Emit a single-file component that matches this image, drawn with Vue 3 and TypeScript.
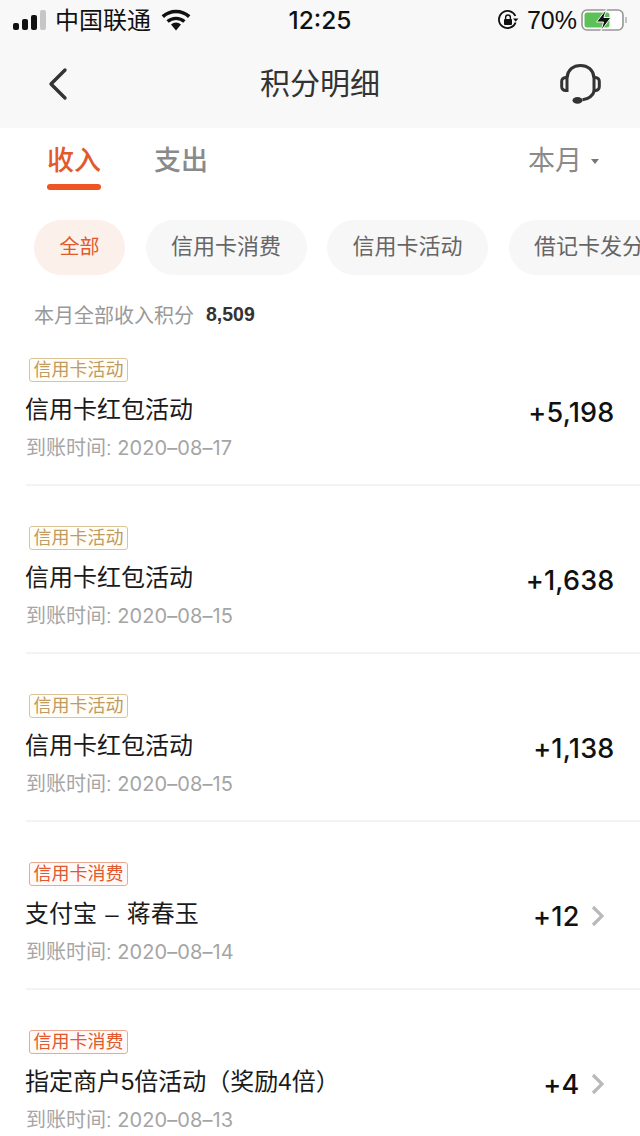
<script setup lang="ts">
interface PointRow {
  tag: string
  title: string
  date: string
  amount: string
  more?: boolean
}

const chips = ["全部", "信用卡消费", "信用卡活动", "借记卡发分"]

const rows: PointRow[] = [
  { tag: "信用卡活动", title: "信用卡红包活动", date: "2020–08–17", amount: "+5,198" },
  { tag: "信用卡活动", title: "信用卡红包活动", date: "2020–08–15", amount: "+1,638" },
  { tag: "信用卡活动", title: "信用卡红包活动", date: "2020–08–15", amount: "+1,138" },
  { tag: "信用卡消费", title: "支付宝 – 蒋春玉", date: "2020–08–14", amount: "+12", more: true },
  { tag: "信用卡消费", title: "指定商户5倍活动（奖励4倍）", date: "2020–08–13", amount: "+4", more: true },
]
</script>

<template>
  <div class="page">
    <div class="top">
      <div class="status">
        <div class="status-side">
          <svg class="signal" width="34" height="22" viewBox="0 0 34 22">
            <rect x="0" y="14" width="6" height="7" rx="2" fill="#111" />
            <rect x="9" y="10" width="6" height="11" rx="2" fill="#111" />
            <rect x="18" y="6" width="6" height="15" rx="2" fill="#111" />
            <rect x="27" y="1" width="6" height="20" rx="2" fill="#c6c6c6" />
          </svg>
          <span class="carrier">中国联通</span>
          <svg class="wifi" width="30" height="22" viewBox="0 0 30 22">
            <path d="M15 21.5 10 15.4a7.6 7.6 0 0 1 10 0Z" fill="#111" />
            <path d="M1.8 7.6a19.6 19.6 0 0 1 26.4 0" fill="none" stroke="#111" stroke-width="3.6" />
            <path d="M6.6 12.6a12.6 12.6 0 0 1 16.8 0" fill="none" stroke="#111" stroke-width="3.4" />
          </svg>
        </div>
        <span class="clock">12:25</span>
        <div class="status-side status-right">
          <svg width="22" height="22" viewBox="0 0 22 22">
            <path d="M18.6 13.5A8.6 8.6 0 1 1 18.4 7" fill="none" stroke="#111" stroke-width="1.8" />
            <path d="M16 9.6h5.4l-2.7 3.2Z" fill="#111" />
            <rect x="7" y="10" width="8" height="6" rx="1" fill="#111" />
            <path d="M8.6 10V8.4a2.4 2.4 0 0 1 4.8 0V10" fill="none" stroke="#111" stroke-width="1.4" />
          </svg>
          <span class="battery-text">70%</span>
          <svg class="battery" width="46" height="24" viewBox="0 0 46 24">
            <rect x="1" y="2" width="41" height="20" rx="5" fill="#fff" stroke="#969696" stroke-width="1.6" />
            <rect x="3.5" y="4.5" width="25" height="15" rx="2.5" fill="#5cc159" />
            <path d="M45 9v6" stroke="#b5b5b5" stroke-width="1.6" />
            <path d="M25.5 1 15.5 14h7l-2.6 9 10-13.5h-7Z" fill="#111" stroke="#f8f8f8" stroke-width="1" />
          </svg>
        </div>
      </div>
      <div class="nav">
        <svg class="nav-back" width="22" height="36" viewBox="0 0 22 36">
          <path d="M18 4 4 18l14 14" fill="none" stroke="#333" stroke-width="3.4" stroke-linecap="round" stroke-linejoin="round" />
        </svg>
        <span class="nav-title">积分明细</span>
        <svg class="nav-service" width="44" height="42" viewBox="0 0 44 42">
          <path d="M8 14.5C9 6.5 14.5 2.5 21.5 2.5S34 6.5 35 14.5" fill="none" stroke="#333" stroke-width="3.2" />
          <path d="M8 14.5H6.5a3.8 3.8 0 0 0-3.8 3.8v5.4a3.8 3.8 0 0 0 3.8 3.8H8Z" fill="none" stroke="#333" stroke-width="3" />
          <path d="M35 14.5h1.5a3.8 3.8 0 0 1 3.8 3.8v5.4a3.8 3.8 0 0 1-3.8 3.8H35Z" fill="none" stroke="#333" stroke-width="3" />
          <path d="M35.5 27.5c-1.5 5-6 8.4-12 9.2" fill="none" stroke="#333" stroke-width="3" />
          <ellipse cx="18.5" cy="37.4" rx="5" ry="3.4" fill="#333" />
        </svg>
      </div>
    </div>

    <div class="tabs">
      <div class="tab tab-active">收入</div>
      <div class="tab">支出</div>
      <div class="month">
        <span>本月</span>
        <i class="month-caret"></i>
      </div>
    </div>

    <div class="chips">
      <span
        v-for="(chip, index) in chips"
        :key="chip"
        class="chip"
        :class="{ 'chip-active': index === 0 }"
      >{{ chip }}</span>
    </div>

    <div class="summary">
      <span>本月全部收入积分</span>
      <b>8,509</b>
    </div>

    <div class="list">
      <div v-for="row in rows" :key="row.date + row.amount" class="row">
        <div class="row-main">
          <span class="tag" :class="{ 'tag-spend': row.tag === '信用卡消费' }">{{ row.tag }}</span>
          <div class="row-title">{{ row.title }}</div>
          <div class="row-date">到账时间: <span class="row-day">{{ row.date }}</span></div>
        </div>
        <div class="row-amount" :class="{ 'row-amount-more': row.more }">
          <span>{{ row.amount }}</span>
          <svg v-if="row.more" width="14" height="22" viewBox="0 0 14 22">
            <path d="M2 2 11 11l-9 9" fill="none" stroke="#b9b9b9" stroke-width="3.2" />
          </svg>
        </div>
      </div>
    </div>
  </div>
</template>

<style scoped>
.page {
  width: 640px;
  height: 1136px;
  overflow: hidden;
  background: #fff;
  font-family: "Liberation Sans", "Noto Sans CJK SC", sans-serif;
}

.top {
  height: 128px;
  background: #f8f8f8;
}

.status {
  height: 40px;
  display: grid;
  grid-template-columns: 1fr auto 1fr;
  align-items: center;
  padding: 0 13px;
  color: #111;
}

.status-side {
  display: flex;
  align-items: center;
}

.status-right {
  justify-content: flex-end;
}

.carrier {
  margin: 0 0 3px 8px;
  font-size: 24px;
}

.wifi {
  margin-left: 10px;
}

.clock {
  font-family: Inter, "Liberation Sans", sans-serif;
  font-size: 24.5px;
  font-weight: 500;
}

.battery-text {
  margin: 0 4px 0 8px;
  font-size: 25px;
}

.nav {
  height: 88px;
  display: grid;
  grid-template-columns: 1fr auto 1fr;
  align-items: center;
  padding: 0 37px;
  box-sizing: border-box;
  color: #333;
}

.nav-back {
  margin-left: 10px;
}

.nav-title {
  font-size: 30px;
  line-height: 40px;
}

.nav-service {
  justify-self: end;
}

.tabs {
  display: flex;
  align-items: flex-start;
  height: 92px;
  box-sizing: border-box;
  padding: 13px 41px 0 47px;
}

.tab {
  position: relative;
  width: 54px;
  margin-right: 53px;
  font-size: 27px;
  line-height: 40px;
  font-weight: 500;
  color: #8a8a8a;
}

.tab-active {
  color: #e05a2d;
}

.tab-active::after {
  content: "";
  position: absolute;
  left: 0;
  right: 0;
  top: 43px;
  height: 6px;
  border-radius: 3px;
  background: #ee5522;
}

.month {
  display: flex;
  align-items: center;
  gap: 9px;
  margin-left: auto;
  font-size: 27px;
  line-height: 40px;
  color: #8a8a8a;
}

.month-caret {
  width: 0;
  height: 0;
  border: 4.5px solid transparent;
  border-top: 5px solid #777;
  border-bottom: 0;
}

.chips {
  display: flex;
  gap: 20.5px;
  padding-left: 34px;
  white-space: nowrap;
}

.chip {
  flex: none;
  height: 55px;
  padding: 0 25.5px;
  border-radius: 28px;
  background: #f7f7f7;
  color: #666;
  font-size: 22px;
  line-height: 54px;
}

.chip-active {
  background: #fbf0ea;
  color: #e05a2d;
  font-size: 20px;
}

.summary {
  display: flex;
  align-items: center;
  gap: 12px;
  height: 26px;
  margin: 26px 0 0 34px;
  color: #999;
  font-size: 20px;
}

.summary b {
  color: #333;
  font-size: 19.5px;
}

.list {
  margin: 31px 0 0 26px;
}

.row {
  display: flex;
  align-items: flex-start;
  justify-content: space-between;
  height: 128px;
  margin-bottom: 40px;
  box-sizing: border-box;
  padding-right: 25.5px;
  border-bottom: 2px solid #f3f3f3;
}

.row-main {
  min-width: 0;
}

.tag {
  display: block;
  width: 99px;
  height: 24px;
  margin-left: 3px;
  box-sizing: border-box;
  border: 1px solid #dcc398;
  border-radius: 3px;
  background: #fffdf8;
  color: #c09a5e;
  font-size: 18px;
  line-height: 22px;
  text-align: center;
  white-space: nowrap;
}

.tag-spend {
  border-color: #eba893;
  background: #fffaf7;
  color: #e0582f;
}

.row-title {
  margin: 11px 0 0 -1px;
  color: #1a1a1a;
  font-size: 24px;
  line-height: 34px;
  word-spacing: 1.5px;
  white-space: nowrap;
}

.row-date {
  margin-top: 7px;
  color: #a5a5a5;
  font-size: 20px;
  line-height: 28px;
  white-space: nowrap;
}

.row-day {
  font-family: Inter, "Liberation Sans", sans-serif;
  font-size: 20px;
  letter-spacing: 0.1px;
}

.row-amount {
  display: flex;
  align-items: center;
  gap: 11px;
  margin-top: 36px;
  height: 36px;
  color: #111;
  font-family: Inter, "Liberation Sans", sans-serif;
  font-size: 27px;
  font-weight: 500;
  letter-spacing: 0.2px;
}

.row-amount-more {
  margin-right: 10px;
}
</style>

<style>
html,
body {
  margin: 0;
  background: #fff;
}
</style>
